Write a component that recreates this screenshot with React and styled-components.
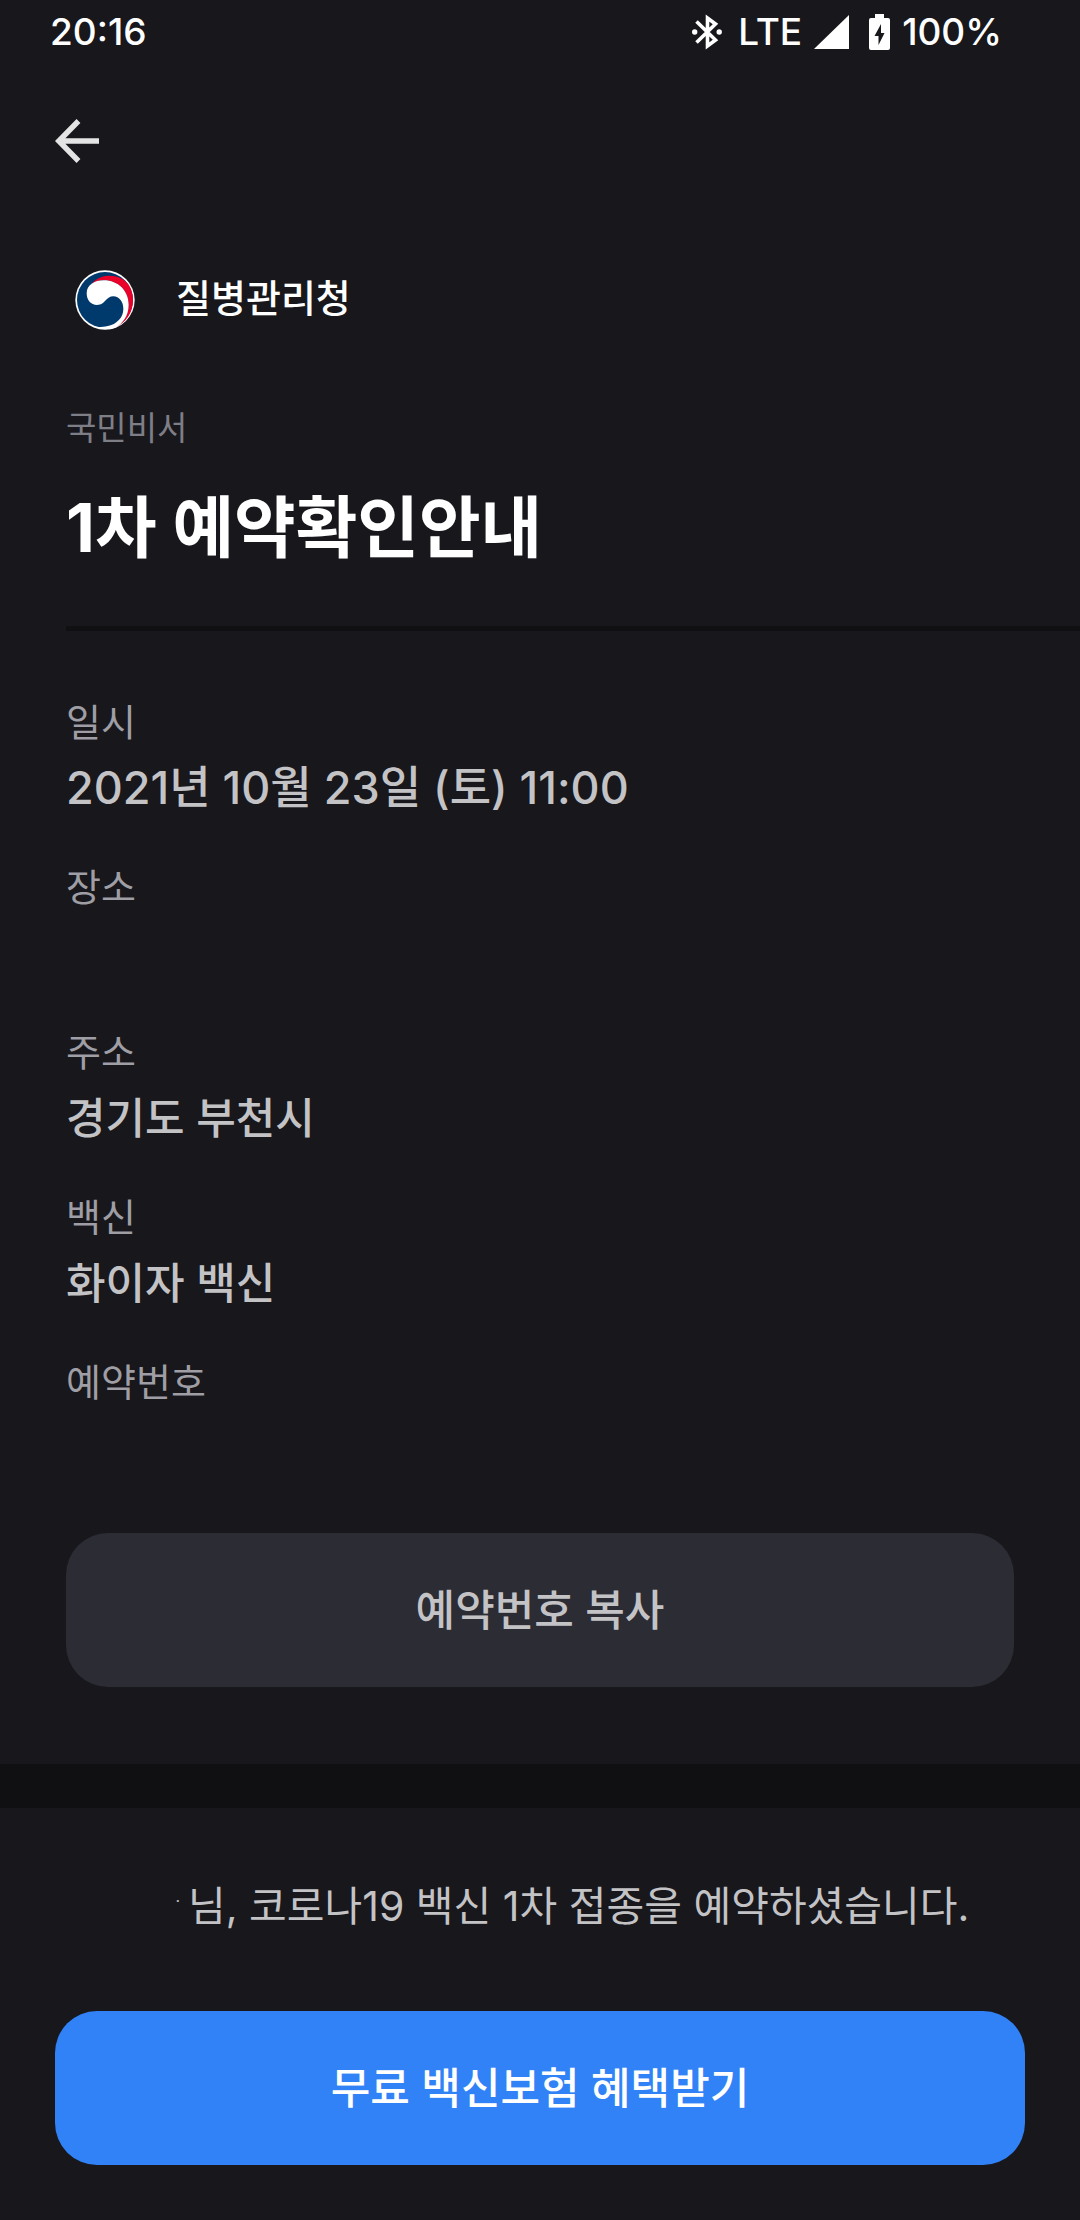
import React from 'react';
import styled, { createGlobalStyle } from 'styled-components';

const GlobalStyle = createGlobalStyle`
  * {
    box-sizing: border-box;
  }
  body {
    margin: 0;
    background-color: #18171c;
    font-family: Inter, 'Noto Sans CJK KR', sans-serif;
  }
`;

const Page = styled.div`
  min-height: 100vh;
  background-color: #18171c;
  color: #c3c3c6;
`;

const StatusBar = styled.div`
  display: flex;
  justify-content: space-between;
  align-items: center;
  padding: 0 78px 0 50px;
  color: white;
  font-size: 37px;
  font-weight: 500;
  line-height: 64px;
`;

const StatusIcons = styled.div`
  display: flex;
  align-items: center;
`;

const Network = styled.span`
  margin: 0 12px 0 16px;
`;

const Battery = styled.span`
  display: flex;
  align-items: center;
  gap: 12px;
  margin-left: 20px;
`;

const Nav = styled.nav`
  padding: 44px 44px 96px;
`;

const BackButton = styled.button`
  display: block;
  padding: 11px;
  border: 0;
  background: none;
  color: #e4e4e5;
  cursor: pointer;

  svg {
    display: block;
  }
`;

const Header = styled.header`
  padding: 0 0 0 66px;
`;

const Sender = styled.div`
  display: flex;
  align-items: flex-start;
  gap: 41px;
  padding-left: 9px;
  color: white;
  font-size: 38px;
  font-weight: 500;
  line-height: 56px;
`;

const Service = styled.p`
  margin: 74px 0 0;
  color: #7e7e87;
  font-size: 33px;
  line-height: 48px;
`;

const Title = styled.h1`
  margin: 32px 0 54px;
  color: white;
  font-size: 67px;
  font-weight: 700;
  line-height: 88px;
`;

const Divider = styled.hr`
  height: 5px;
  margin: 0;
  border: 0;
  background-color: #101013;
`;

const Details = styled.section`
  padding: 61px 66px 77px;
`;

const Fields = styled.dl`
  display: flex;
  flex-direction: column;
  gap: 33px;
  margin: 0 0 49px;
`;

const Label = styled.dt`
  color: #9e9ea4;
  font-size: 38px;
  line-height: 60px;
`;

const Value = styled.dd`
  min-height: 72px;
  margin: 0;
  font-size: ${props => props.$numeric ? '45px' : '43px'};
  font-weight: 500;
  line-height: 72px;
`;

const Button = styled.button`
  display: block;
  width: 100%;
  padding: 41px 0;
  border: 0;
  border-radius: 42px;
  background-color: ${props => props.$primary ? '#3182f6' : '#2c2c35'};
  color: ${props => props.$primary ? 'white' : '#c3c3c6'};
  font-family: inherit;
  font-size: 43px;
  font-weight: 500;
  line-height: 72px;
  cursor: pointer;
`;

const Band = styled.div`
  height: 44px;
  background-color: #101013;
`;

const Message = styled.p`
  display: flex;
  margin: 0;
  padding: 66px 66px 0;
  font-size: 41px;
  line-height: 64px;
`;

const Name = styled.span`
  width: 122px;
  padding-right: 8px;
  text-align: right;
  font-size: 16px;
  line-height: 54px;
`;

const Footer = styled.footer`
  padding: 73px 55px 55px;
`;

const BluetoothIcon = () => (
  <svg width="30" height="36" viewBox="0 0 30 36" fill="none" stroke="currentColor" strokeWidth="3.600">
    <path d="M4.500 7.500 L23.500 26 L15.500 32 V4 L23.500 10 L4.500 28.500" />
    <circle cx="2.700" cy="18" r="2.700" fill="currentColor" stroke="none" />
    <circle cx="27.200" cy="18" r="2.700" fill="currentColor" stroke="none" />
  </svg>
);

const SignalIcon = () => (
  <svg width="35" height="34" viewBox="0 0 35 34" fill="currentColor">
    <path d="M35 0 V34 H0 Z" />
  </svg>
);

const BatteryIcon = () => (
  <svg width="21" height="36" viewBox="0 0 21 36" fill="currentColor">
    <path
      fillRule="evenodd"
      d="M6 0 H15 V4 H19 Q21 4 21 6 V34 Q21 36 19 36 H2 Q0 36 0 34 V6 Q0 4 2 4 H6 Z M12 10 L5.500 22 H9.500 V31 L15.500 19 H12 Z"
    />
  </svg>
);

const ArrowIcon = () => (
  <svg width="44" height="44" viewBox="0 0 44 44" fill="none" stroke="currentColor" strokeWidth="5.400">
    <path d="M23.500 2 L3.800 22 L23.500 42 M4 22 H44" />
  </svg>
);

const Emblem = () => (
  <svg width="60" height="60" viewBox="0 0 180 180">
    <circle cx="90" cy="90" r="89" fill="white" />
    <circle cx="90" cy="90" r="84" fill="#003a6c" />
    <path
      d="M36 68 C44 38 70 17 102 17 C128 17 148 27 160 43 C168 55 174 72 174 90 C174 128 153 157 121 173 C145 158 161 136 161 104 C161 63 130 31 86 31 C58 31 40 45 36 68 Z"
      fill="#ea0029"
    />
    <path
      d="M35 70 C35 45 58 31 86 31 C130 31 161 63 161 104 C161 136 145 158 121 173 C112 176 101 177 90 177 C83 177 76 176 70 171 C90 170 108 168 122 158 C138 147 145 133 145 116 C145 96 133 79 115 79 C104 79 99 84 92 91 C85 99 79 105 66 105 C48 105 35 91 35 70 Z"
      fill="white"
    />
  </svg>
);

const fields = [
  { label: '일시', value: '2021년 10월 23일 (토) 11:00', numeric: true },
  { label: '장소', value: '' },
  { label: '주소', value: '경기도 부천시' },
  { label: '백신', value: '화이자 백신' },
  { label: '예약번호', value: '' },
];

export default function App() {
  return (
    <Page>
      <GlobalStyle />
      <StatusBar>
        <span>20:16</span>
        <StatusIcons>
          <BluetoothIcon />
          <Network>LTE</Network>
          <SignalIcon />
          <Battery>
            <BatteryIcon />
            100%
          </Battery>
        </StatusIcons>
      </StatusBar>
      <Nav>
        <BackButton aria-label="뒤로">
          <ArrowIcon />
        </BackButton>
      </Nav>
      <main>
        <Header>
          <Sender>
            <Emblem />
            질병관리청
          </Sender>
          <Service>국민비서</Service>
          <Title>1차 예약확인안내</Title>
          <Divider />
        </Header>
        <Details>
          <Fields>
            {fields.map(field => (
              <div key={field.label}>
                <Label>{field.label}</Label>
                <Value $numeric={field.numeric}>{field.value}</Value>
              </div>
            ))}
          </Fields>
          <Button>예약번호 복사</Button>
        </Details>
        <Band />
        <Message>
          <Name>·</Name>
          님, 코로나19 백신 1차 접종을 예약하셨습니다.
        </Message>
      </main>
      <Footer>
        <Button $primary>무료 백신보험 혜택받기</Button>
      </Footer>
    </Page>
  );
}
